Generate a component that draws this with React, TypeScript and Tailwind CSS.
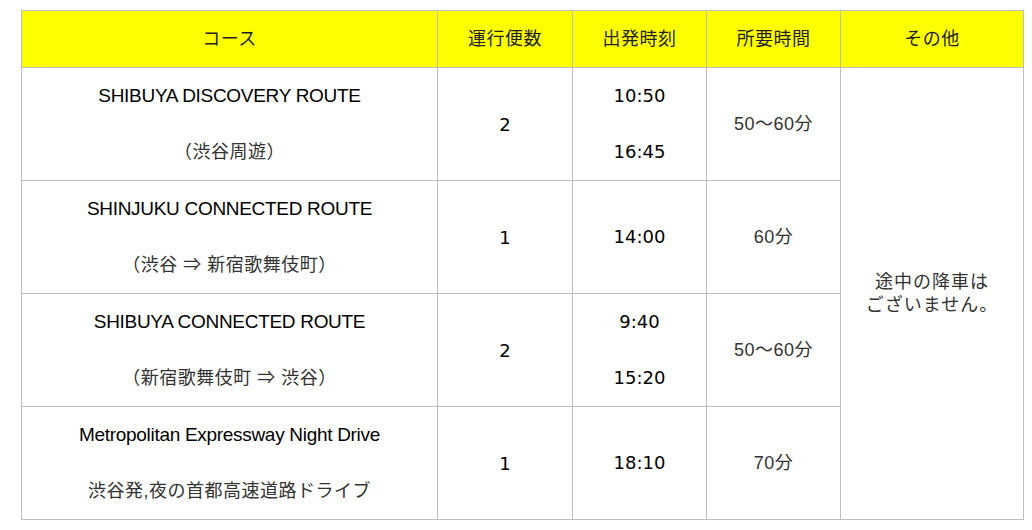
const jp = "font-['Liberation_Sans','Noto_Sans_CJK_JP',sans-serif]";

type Row = {
  en: string;
  ja: string;
  runs: string;
  times: string[];
  duration: string;
};

const rows: Row[] = [
  { en: 'SHIBUYA DISCOVERY ROUTE', ja: '（渋谷周遊）', runs: '2', times: ['10:50', '16:45'], duration: '50〜60分' },
  { en: 'SHINJUKU CONNECTED ROUTE', ja: '（渋谷 ⇒ 新宿歌舞伎町）', runs: '1', times: ['14:00'], duration: '60分' },
  { en: 'SHIBUYA CONNECTED ROUTE', ja: '（新宿歌舞伎町 ⇒ 渋谷）', runs: '2', times: ['9:40', '15:20'], duration: '50〜60分' },
  { en: 'Metropolitan Expressway Night Drive', ja: '渋谷発,夜の首都高速道路ドライブ', runs: '1', times: ['18:10'], duration: '70分' },
];

const cell = 'border border-[#bfbfbf] text-center align-middle p-0';

export default function App() {
  return (
    <div className="w-[1032px] h-[530px] bg-white pt-[10px] pl-[21px]">
      <table className={`border-collapse table-fixed w-[1002px] ${jp}`}>
        <colgroup>
          <col className="w-[416px]" />
          <col className="w-[135px]" />
          <col className="w-[134px]" />
          <col className="w-[134px]" />
          <col className="w-[183px]" />
        </colgroup>
        <thead>
          <tr className="h-[57px] bg-[#ffff00] text-[18px] tracking-[0.5px] text-[#222]">
            <th className={`${cell} font-normal`}>コース</th>
            <th className={`${cell} font-normal`}>運行便数</th>
            <th className={`${cell} font-normal`}>出発時刻</th>
            <th className={`${cell} font-normal`}>所要時間</th>
            <th className={`${cell} font-normal`}>その他</th>
          </tr>
        </thead>
        <tbody>
          {rows.map((r, i) => (
            <tr key={i} className="h-[113px]">
              <td className={cell}>
                <div className="flex flex-col items-center gap-[32px]">
                  <span className="text-[19px] leading-[24px] text-black tracking-[-0.3px]">{r.en}</span>
                  <span className="text-[18px] leading-[24px] text-[#333] tracking-[0.5px]">{r.ja}</span>
                </div>
              </td>
              <td className={`${cell} text-[18px] text-black font-['DejaVu_Sans',sans-serif]`}>{r.runs}</td>
              <td className={`${cell} text-[18px] text-black font-['DejaVu_Sans',sans-serif]`}>
                <div className="flex flex-col items-center gap-[32px]">
                  {r.times.map((t) => (
                    <span key={t} className="leading-[24px]">{t}</span>
                  ))}
                </div>
              </td>
              <td className={`${cell} text-[18px] tracking-[0.5px] text-[#333]`}>{r.duration}</td>
              {i === 0 && (
                <td rowSpan={4} className={`${cell} text-[18px] leading-[23px] tracking-[1px] text-[#333]`}>
                  途中の降車は
                  <br />
                  ございません。
                </td>
              )}
            </tr>
          ))}
        </tbody>
      </table>
    </div>
  );
}
